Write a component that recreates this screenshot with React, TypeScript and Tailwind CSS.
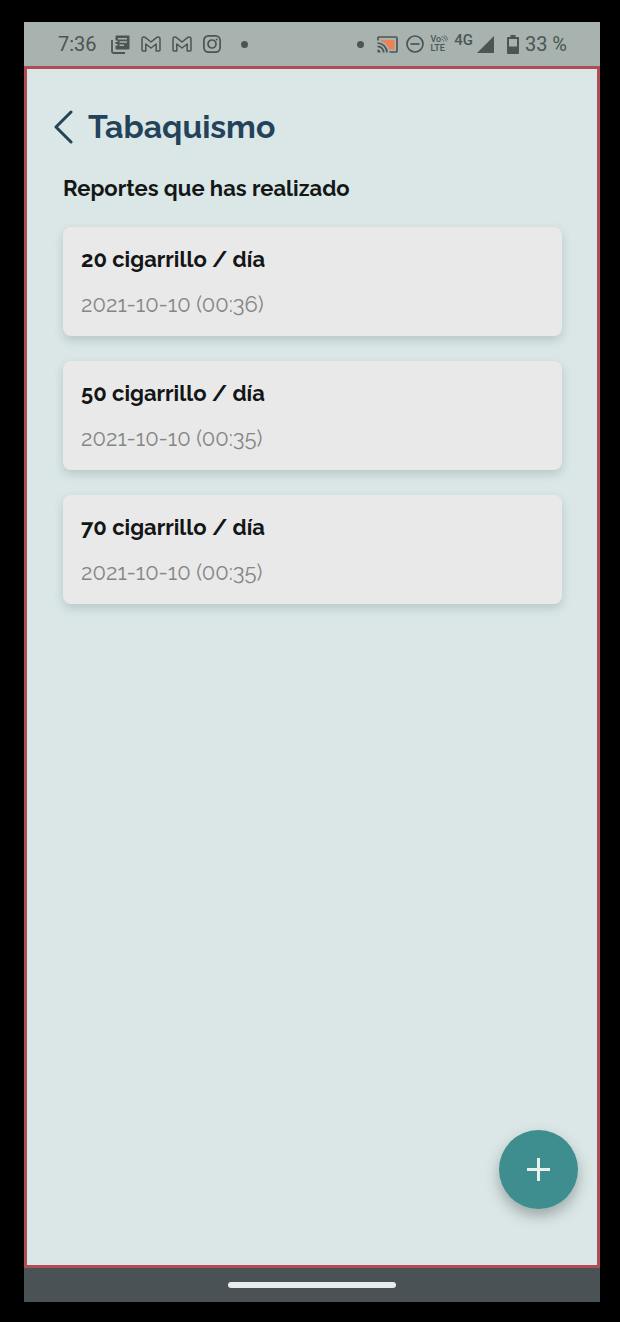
import React from "react";

type Report = { id: number; amount: string; date: string };

const reports: Report[] = [
  { id: 1, amount: "20 cigarrillo / día", date: "2021-10-10 (00:36)" },
  { id: 2, amount: "50 cigarrillo / día", date: "2021-10-10 (00:35)" },
  { id: 3, amount: "70 cigarrillo / día", date: "2021-10-10 (00:35)" },
];

function NewsIcon() {
  return (
    <svg width="19" height="19" viewBox="0 0 19 19" aria-hidden="true">
      <path d="M1 5v11.5q0 1.500 1.500 1.500H14" fill="none" stroke="currentColor" strokeWidth="1.800" />
      <path
        fillRule="evenodd"
        fill="currentColor"
        d="M5.500 0.500h12q1 0 1 1v12q0 1-1 1h-12q-1 0-1-1v-3h2v-1.500h-2v-2h2V5.500h-2v-4q0-1 1-1zM7 3v1.400h9V3zM8.500 6.300v1.400H16V6.300zM8.500 9.600V11H13V9.600z"
      />
    </svg>
  );
}

function MailIcon() {
  return (
    <svg width="20" height="16" viewBox="0 0 20 16" fill="none" stroke="currentColor" strokeWidth="1.500" strokeLinejoin="round" aria-hidden="true">
      <path d="M1 3.200Q1 1 3 1q.8 0 1.500.6L10 6l5.500-4.400Q16.200 1 17 1q2 0 2 2.200V14q0 1-1 1h-2.800V8L10 12 4.800 8V15H2q-1 0-1-1z" />
    </svg>
  );
}

function CameraIcon() {
  return (
    <svg width="18" height="18" viewBox="0 0 18 18" fill="none" stroke="currentColor" strokeWidth="1.700" aria-hidden="true">
      <rect x="0.9" y="0.9" width="16.200" height="16.200" rx="4.500" />
      <circle cx="9" cy="9" r="4" />
      <circle cx="13.600" cy="4.400" r="1" fill="currentColor" stroke="none" />
    </svg>
  );
}

function CastIcon() {
  return (
    <svg width="21" height="17" viewBox="0 0 21 17" fill="none" aria-hidden="true">
      <path d="M4 4h13.500v9.500H12Q10.500 7 4 5.500z" fill="#ec8154" />
      <g stroke="currentColor" strokeWidth="1.700">
        <path d="M1 4.500V2q0-1 1-1h17q1 0 1 1v13q0 1-1 1h-6.500" />
        <path d="M.5 7a9.500 9.500 0 0 1 9.500 9.500M.5 10.300a6.200 6.200 0 0 1 6.200 6.200" />
      </g>
      <path d="M.5 13.500a3 3 0 0 1 3 3h-3z" fill="currentColor" />
    </svg>
  );
}

function DoNotDisturbIcon() {
  return (
    <svg width="18" height="18" viewBox="0 0 18 18" fill="none" stroke="currentColor" strokeWidth="1.700" aria-hidden="true">
      <circle cx="9" cy="9" r="8" />
      <path d="M4.500 9h9" />
    </svg>
  );
}

function WaveIcon() {
  return (
    <svg width="7" height="7" viewBox="0 0 7 7" fill="none" stroke="currentColor" strokeWidth="0.700" aria-hidden="true">
      <path d="M.5 1.500Q4 1.500 5.500 6.500M.5 4Q2 4 3 6.500M3 .5Q6 1 6.500 5" />
    </svg>
  );
}

function SignalIcon() {
  return (
    <svg width="17" height="17" viewBox="0 0 17 17" fill="currentColor" aria-hidden="true">
      <path d="M17 0v17H0z" />
    </svg>
  );
}

function BatteryIcon() {
  return (
    <svg width="12" height="19" viewBox="0 0 12 19" aria-hidden="true">
      <path
        fill="currentColor"
        fillRule="evenodd"
        d="M3.500 0h5v2H11q1 0 1 1v15q0 1-1 1H1q-1 0-1-1V3q0-1 1-1h2.500zM2 4v7.500h8V4z"
      />
    </svg>
  );
}

function Dot() {
  return <span className="size-[7px] rounded-full bg-[#4c5553]" />;
}

function StatusBar() {
  return (
    <header className="flex h-11 items-center justify-between bg-[#a8b2af] pr-[33px] pl-[34px] font-[Roboto,sans-serif] text-[20px] leading-6 text-[#4c5553]">
      <div className="flex items-center">
        <span className="mr-[14px]">7:36</span>
        <div className="flex items-center gap-[11px]">
          <NewsIcon />
          <MailIcon />
          <MailIcon />
          <CameraIcon />
        </div>
        <span className="ml-5 flex">
          <Dot />
        </span>
      </div>
      <div className="flex items-center">
        <Dot />
        <span className="ml-[13px] flex items-center gap-2">
          <CastIcon />
          <DoNotDisturbIcon />
        </span>
        <span className="ml-[6px] flex flex-col text-[9px] leading-[9px] font-medium">
          <span className="flex">
            Vo
            <WaveIcon />
          </span>
          <span>LTE</span>
        </span>
        <span className="ml-[6px] flex items-center gap-1">
          <span className="mb-2 text-[15px] leading-4 font-medium">4G</span>
          <SignalIcon />
        </span>
        <span className="ml-[13px] flex items-center gap-[6px]">
          <BatteryIcon />
          <span>33 %</span>
        </span>
      </div>
    </header>
  );
}

function ReportCard({ report }: { report: Report }) {
  return (
    <li className="rounded-lg bg-[#e9e9e9] p-[18px] text-[22px] leading-7 shadow-[0_4px_10px_rgba(60,90,90,0.22)]">
      <p className="font-bold text-[#131516]">{report.amount}</p>
      <p className="mt-[17px] text-[#858686]">{report.date}</p>
    </li>
  );
}

export default function App() {
  return (
    <div className="flex min-h-screen flex-col bg-black pt-[22px] pr-5 pb-5 pl-6">
      <StatusBar />
      <main className="flex flex-1 flex-col border-[3px] border-[#ae4d55] bg-[#dae7e6] font-[Raleway,Inter,sans-serif]">
        <div className="flex items-center gap-[14px] pt-9 pl-[27px] text-[#23435b]">
          <button type="button" aria-label="Volver" className="flex">
            <svg width="20" height="34" viewBox="0 0 20 34" fill="none" stroke="currentColor" strokeWidth="3" strokeLinecap="round" strokeLinejoin="round" aria-hidden="true">
              <path d="M17 2L2 17l15 15" />
            </svg>
          </button>
          <h1 className="text-[32px] leading-[44px] font-bold">Tabaquismo</h1>
        </div>
        <section className="pt-[25px] pr-[35px] pl-9">
          <h2 className="text-[22px] leading-7 font-bold text-[#131817]">Reportes que has realizado</h2>
          <ul className="mt-[25px] flex flex-col gap-[25px]">
            {reports.map((report) => (
              <ReportCard key={report.id} report={report} />
            ))}
          </ul>
        </section>
        <button
          type="button"
          aria-label="Agregar reporte"
          className="mt-auto mr-[19px] mb-14 flex size-[79px] items-center justify-center self-end rounded-full bg-[#3f8e8f] text-[#e6f1f0] shadow-[0_7px_14px_rgba(40,50,50,0.34)]"
        >
          <svg width="23" height="23" viewBox="0 0 23 23" stroke="currentColor" strokeWidth="3" aria-hidden="true">
            <path d="M11.500 0v23M0 11.500h23" />
          </svg>
        </button>
      </main>
      <footer className="flex h-[34px] items-center justify-center bg-[#4a5256]">
        <span className="h-[6px] w-[168px] rounded-full bg-[#e9ecec]" />
      </footer>
    </div>
  );
}
